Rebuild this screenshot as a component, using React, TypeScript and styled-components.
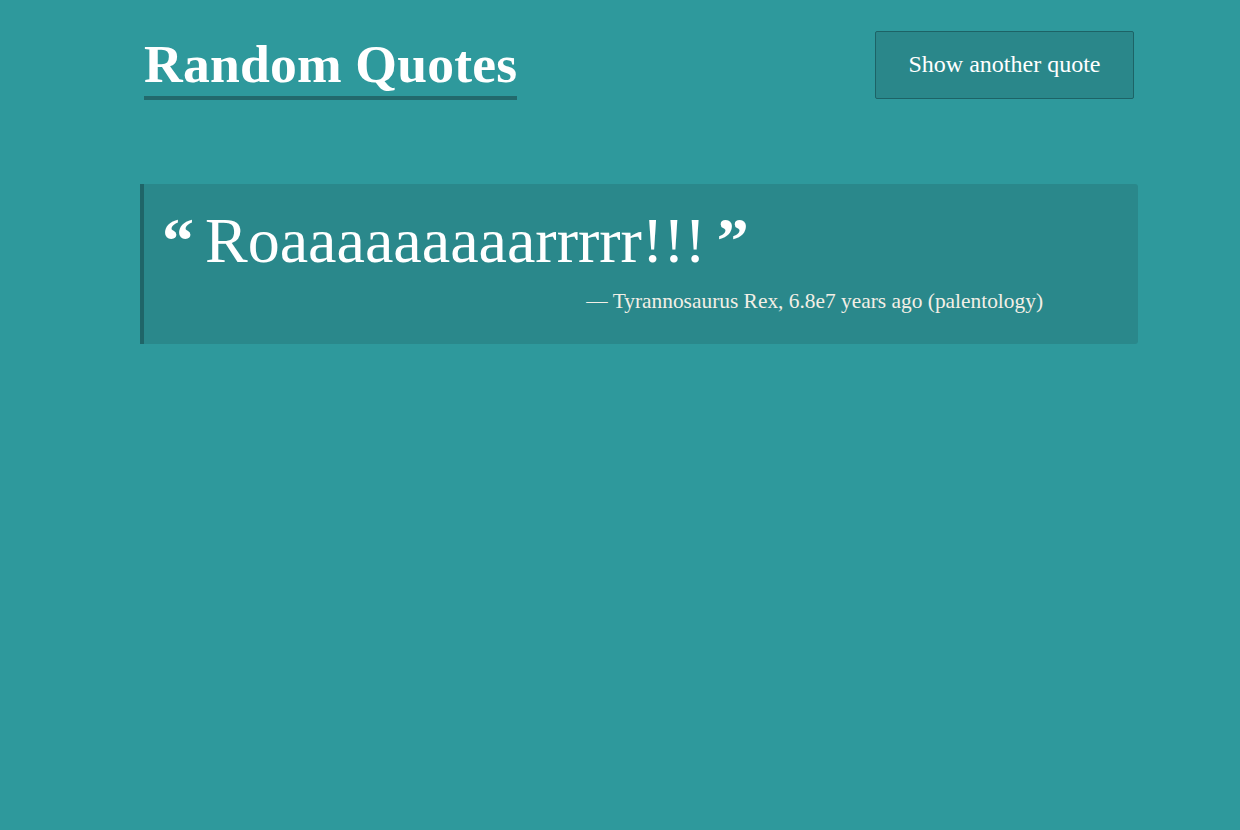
import React from "react";
import styled, { createGlobalStyle } from "styled-components";

const Global = createGlobalStyle`
  html, body { margin: 0; padding: 0; }
  body {
    background: #2e999c;
    font-family: "Liberation Serif", "DejaVu Serif", serif;
    color: #ffffff;
    min-height: 830px;
  }
`;

const Page = styled.div`
  width: 998px;
  margin: 0 0 0 140px;
  padding-top: 31px;
`;

const Header = styled.header`
  display: flex;
  justify-content: space-between;
  align-items: flex-start;
  padding-left: 4px;
  padding-right: 4px;
`;

const Title = styled.h1`
  margin: 0;
  font-size: 53.6px;
  font-weight: 700;
  line-height: 1;
  padding-top: 7px;
  padding-bottom: 4px;
  border-bottom: 4px solid #22696c;
  letter-spacing: 0.2px;
`;

const Button = styled.button`
  width: 259px;
  height: 68px;
  padding: 0 0 2px;
  background: #2a878a;
  border: 1px solid #1d6366;
  border-radius: 2px;
  color: #ffffff;
  font-family: inherit;
  font-size: 24px;
  cursor: pointer;
`;

const Card = styled.blockquote`
  margin: 84px 0 0 0;
  background: #2a888b;
  border-left: 4px solid #1f6568;
  border-radius: 0 3px 3px 0;
  padding: 22px 95px 30px 18px;
  display: flex;
  flex-direction: column;
`;

const QuoteText = styled.p`
  margin: 0;
  font-size: 64px;
  font-weight: 400;
  line-height: 1.1;
  display: flex;
  align-items: flex-start;
  gap: 11px;
`;

const Mark = styled.span`
  font-weight: 700;
  font-size: 64px;
  line-height: 1.1;
`;

const Cite = styled.cite`
  align-self: flex-end;
  font-style: normal;
  font-size: 21.4px;
  color: #f3efe6;
  margin-top: 13px;
`;

export default function App() {
  return (
    <>
      <Global />
      <Page>
        <Header>
          <Title>Random Quotes</Title>
          <Button>Show another quote</Button>
        </Header>
        <Card>
          <QuoteText>
            <Mark>“</Mark>
            <span>Roaaaaaaaaarrrrr!!!</span>
            <Mark>”</Mark>
          </QuoteText>
          <Cite>— Tyrannosaurus Rex, 6.8e7 years ago (palentology)</Cite>
        </Card>
      </Page>
    </>
  );
}
